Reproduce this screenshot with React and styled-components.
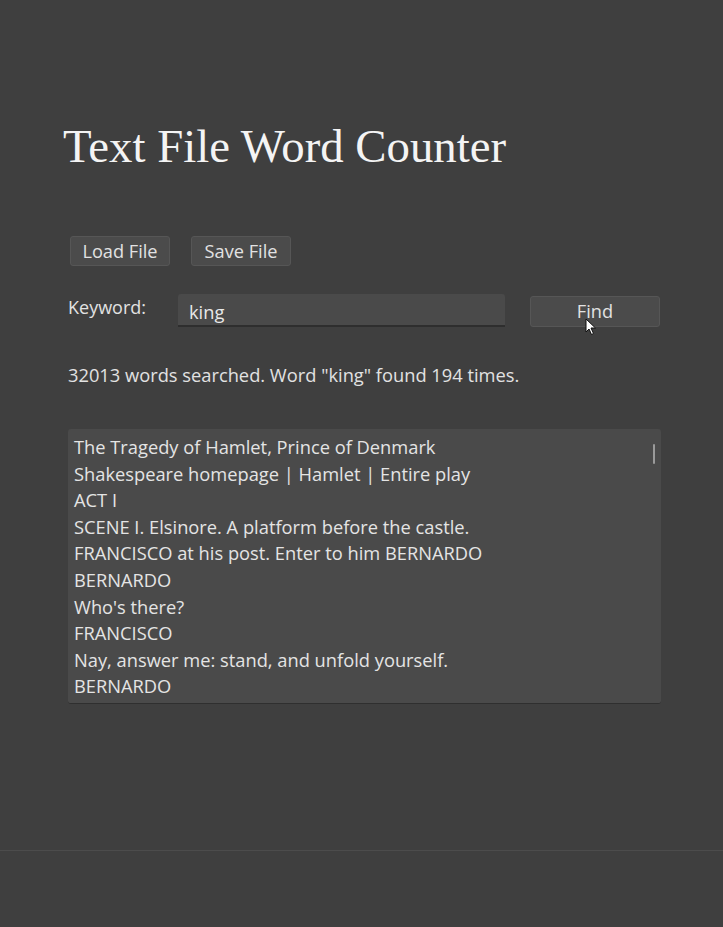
import React from 'react';
import styled, { createGlobalStyle } from 'styled-components';

const GlobalStyle = createGlobalStyle`
  html, body {
    margin: 0;
    padding: 0;
    background: #3f3f3f;
  }
  body {
    font-family: "Open Sans", "Noto Sans", sans-serif;
    color: #e6e6e6;
  }
`;

const Page = styled.div`
  width: 723px;
  height: 927px;
  display: flex;
  flex-direction: column;
  background: #3f3f3f;
`;

const Content = styled.div`
  height: 850px;
  padding: 118px 0 0 63px;
  box-sizing: border-box;
  display: flex;
  flex-direction: column;
`;

const Title = styled.h1`
  margin: 0;
  font-family: "Liberation Serif", "DejaVu Serif", serif;
  font-weight: normal;
  font-size: 46.8px;
  line-height: 56px;
  color: #f4f4f4;
`;

const ButtonRow = styled.div`
  display: flex;
  gap: 21px;
  margin: 62px 0 0 7px;
`;

const Button = styled.button`
  position: relative;
  width: ${({ $w }) => $w}px;
  height: ${({ $h }) => $h || 30}px;
  padding: 0;
  background: #4b4b4b;
  border: 1px solid #565656;
  border-radius: 3px;
  color: #e2e2e2;
  font-family: "Open Sans", "Noto Sans", sans-serif;
  font-size: 18.2px;
  line-height: 1;
`;

const SearchRow = styled.div`
  display: flex;
  align-items: flex-start;
  margin: 28px 0 0 5px;
`;

const Label = styled.span`
  font-size: 18px;
  line-height: 22px;
  margin-top: 2px;
  width: 110px;
  color: #e2e2e2;
`;

const Input = styled.div`
  width: 327px;
  height: 33px;
  box-sizing: border-box;
  padding: 7px 0 0 11px;
  background: #4a4a4a;
  border-bottom: 2px solid #2e2e2e;
  border-radius: 3px 3px 0 0;
  font-size: 18.3px;
  line-height: 22px;
  color: #e8e8e8;
`;

const FindWrap = styled.div`
  margin: 2px 0 0 25px;
`;

const Cursor = styled.svg`
  position: absolute;
  left: 54px;
  top: 21px;
`;

const Status = styled.p`
  margin: 36px 0 0 5px;
  font-size: 18.3px;
  line-height: 24px;
  color: #e2e2e2;
`;

const TextArea = styled.div`
  position: relative;
  margin: 42px 0 0 5px;
  width: 593px;
  height: 275px;
  box-sizing: border-box;
  padding: 5px 0 0 6px;
  background: #4a4a4a;
  border-radius: 3px;
  border-bottom: 1px solid #2f2f2f;
  overflow: hidden;
`;

const Line = styled.div`
  font-size: 18.3px;
  line-height: 26.6px;
  color: #e4e4e4;
  white-space: nowrap;
`;

const ScrollThumb = styled.div`
  position: absolute;
  right: 6px;
  top: 15px;
  width: 2px;
  height: 20px;
  background: #9a9a9a;
  border-radius: 1px;
`;

const Footer = styled.div`
  flex: 1;
  border-top: 1px solid #4c4c4c;
`;

const lines = [
  'The Tragedy of Hamlet, Prince of Denmark',
  'Shakespeare homepage | Hamlet | Entire play',
  'ACT I',
  'SCENE I. Elsinore. A platform before the castle.',
  'FRANCISCO at his post. Enter to him BERNARDO',
  'BERNARDO',
  "Who's there?",
  'FRANCISCO',
  'Nay, answer me: stand, and unfold yourself.',
  'BERNARDO',
];

export default function App() {
  return (
    <>
      <GlobalStyle />
      <Page>
        <Content>
          <Title>Text File Word Counter</Title>
          <ButtonRow>
            <Button $w={100}>Load File</Button>
            <Button $w={100}>Save File</Button>
          </ButtonRow>
          <SearchRow>
            <Label>Keyword:</Label>
            <Input>king</Input>
            <FindWrap>
              <Button $w={130} $h={31}>
                Find
                <Cursor width="12" height="18" viewBox="0 0 12 18">
                  <path d="M1 1 L1 14 L4 11 L6.5 16.5 L8.5 15.5 L6 10 L10.5 10 Z" fill="#fff" stroke="#111" strokeWidth="1" />
                </Cursor>
              </Button>
            </FindWrap>
          </SearchRow>
          <Status>32013 words searched. Word "king" found 194 times.</Status>
          <TextArea>
            {lines.map((l, i) => (
              <Line key={i}>{l}</Line>
            ))}
            <ScrollThumb />
          </TextArea>
        </Content>
        <Footer />
      </Page>
    </>
  );
}
